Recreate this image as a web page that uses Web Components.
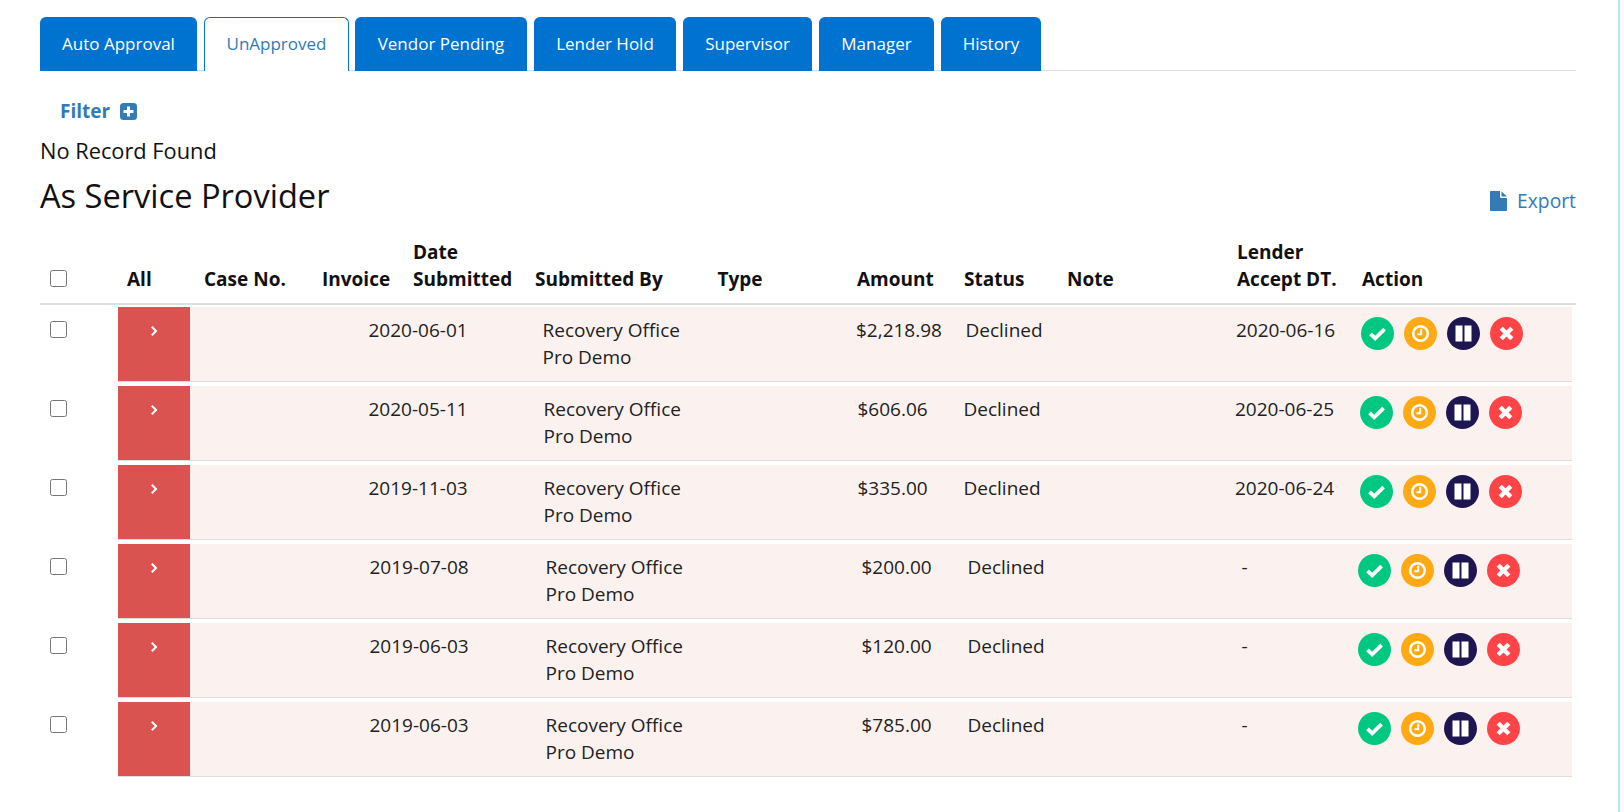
<!DOCTYPE html>
<html>
<head>
<meta charset="utf-8">
<title>Invoices</title>
<style>
  html, body { margin: 0; padding: 0; background: #fff; }
  body { font-family: "Open Sans", sans-serif; color: #111; }
</style>
</head>
<body>
<x-page>
  <x-tabs>
    <x-tab width="157">Auto Approval</x-tab>
    <x-tab width="145" active>UnApproved</x-tab>
    <x-tab width="172">Vendor Pending</x-tab>
    <x-tab width="142">Lender Hold</x-tab>
    <x-tab width="129">Supervisor</x-tab>
    <x-tab width="115">Manager</x-tab>
    <x-tab width="100">History</x-tab>
  </x-tabs>
  <x-filter>Filter</x-filter>
  <x-message>No Record Found</x-message>
  <x-section-head>As Service Provider</x-section-head>
  <x-table-head></x-table-head>
  <x-case-row date="2020-06-01" amount="$2,218.98" status="Declined" lender="2020-06-16" at="368.5,542.5,856,965.5,1236,1361"></x-case-row>
  <x-case-row date="2020-05-11" amount="$606.06" status="Declined" lender="2020-06-25" at="368.5,543.5,857.5,963.5,1235,1360"></x-case-row>
  <x-case-row date="2019-11-03" amount="$335.00" status="Declined" lender="2020-06-24" at="368.5,543.5,857.5,963.5,1235,1360"></x-case-row>
  <x-case-row date="2019-07-08" amount="$200.00" status="Declined" lender="-" at="369.5,545.5,861.5,967.5,1241.5,1358"></x-case-row>
  <x-case-row date="2019-06-03" amount="$120.00" status="Declined" lender="-" at="369.5,545.5,861.5,967.5,1241.5,1358"></x-case-row>
  <x-case-row date="2019-06-03" amount="$785.00" status="Declined" lender="-" at="369.5,545.5,861.5,967.5,1241.5,1358"></x-case-row>
</x-page>

<script>
class XPage extends HTMLElement {
  constructor() {
    super();
    this.attachShadow({ mode: 'open' });
    this.shadowRoot.innerHTML = `
      <style>
        :host {
          display: block;
          box-sizing: border-box;
          width: 1620px;
          height: 812px;
          padding: 17px 0 0 40px;
          border-right: 2px solid #b5e6ee;
          overflow: hidden;
        }
        .inner { width: 1536px; }
      </style>
      <div class="inner"><slot></slot></div>
    `;
  }
}

class XTabs extends HTMLElement {
  constructor() {
    super();
    this.attachShadow({ mode: 'open' });
    this.shadowRoot.innerHTML = `
      <style>
        :host {
          display: flex;
          gap: 7px;
          height: 54px;
          box-shadow: inset 0 -1px 0 #ddd;
        }
      </style>
      <slot></slot>
    `;
  }
}

class XTab extends HTMLElement {
  constructor() {
    super();
    this.attachShadow({ mode: 'open' });
    this.shadowRoot.innerHTML = `
      <style>
        :host {
          display: flex;
          align-items: center;
          justify-content: center;
          box-sizing: border-box;
          height: 54px;
          background: #0073d1;
          color: #fff;
          font: 17px "Open Sans", sans-serif;
          border-radius: 6px 6px 0 0;
          border: 1px solid #0073d1;
          border-bottom: 0;
          padding-bottom: 3px;
        }
        :host([active]) {
          background: #fff;
          color: #337ab7;
          margin-right: -1px;
        }
      </style>
      <slot></slot>
    `;
  }

  connectedCallback() {
    this.style.width = this.getAttribute('width') + 'px';
  }
}

class XFilter extends HTMLElement {
  constructor() {
    super();
    this.attachShadow({ mode: 'open' });
    this.shadowRoot.innerHTML = `
      <style>
        :host {
          display: flex;
          align-items: center;
          gap: 10px;
          height: 26px;
          margin-top: 27px;
          padding-left: 20px;
          color: #337ab7;
          font: 700 19px "Open Sans", sans-serif;
        }
        svg { display: block; }
      </style>
      <slot></slot>
      <svg width="17" height="17" viewBox="0 0 17 17">
        <rect x="0" y="0" width="17" height="17" rx="3.5" fill="#337ab7"/>
        <rect x="3.5" y="7" width="10" height="3" fill="#fff"/>
        <rect x="7" y="3.5" width="3" height="10" fill="#fff"/>
      </svg>
    `;
  }
}

class XMessage extends HTMLElement {
  constructor() {
    super();
    this.attachShadow({ mode: 'open' });
    this.shadowRoot.innerHTML = `
      <style>
        :host {
          display: block;
          margin-top: 13px;
          font: 21.8px/28px "Open Sans", sans-serif;
          color: #111;
        }
      </style>
      <slot></slot>
    `;
  }
}

class XSectionHead extends HTMLElement {
  constructor() {
    super();
    this.attachShadow({ mode: 'open' });
    this.shadowRoot.innerHTML = `
      <style>
        :host {
          display: flex;
          justify-content: space-between;
          align-items: flex-start;
          height: 44px;
          margin-top: 9px;
          color: #111;
          font: 32.6px/44px "Open Sans", sans-serif;
        }
        a {
          display: flex;
          align-items: center;
          gap: 10px;
          margin-top: 13px;
          color: #337ab7;
          font-size: 19.3px;
          line-height: 28px;
          text-decoration: none;
        }
        svg { display: block; }
      </style>
      <span><slot></slot></span>
      <a href="#">
        <svg width="17" height="20" viewBox="0 0 17 20">
          <path d="M0 0.8C0 0.3 0.3 0 0.8 0H10V5.6C10 6.4 10.6 7 11.4 7H17V19.2C17 19.7 16.7 20 16.2 20H0.8C0.3 20 0 19.7 0 19.2Z" fill="#337ab7"/>
          <path d="M11.5 0.2L16.8 5.5H11.5Z" fill="#337ab7"/>
        </svg>
        Export
      </a>
    `;
  }
}

class XTableHead extends HTMLElement {
  constructor() {
    super();
    this.attachShadow({ mode: 'open' });
    this.shadowRoot.innerHTML = `
      <style>
        :host {
          display: grid;
          grid-template-columns: 87px 77px 118px 91px 122px 182.5px 139.5px 107px 103px 170px 125px 1fr;
          align-items: end;
          margin-top: 13px;
          margin-bottom: 2px;
          padding-bottom: 10px;
          height: 62px;
          border-bottom: 2px solid #ddd;
          color: #111;
          font: 700 19px/27px "Open Sans", sans-serif;
        }
        input {
          width: 17px;
          height: 17px;
          margin: 0 0 6px 10px;
          display: block;
        }
      </style>
      <input type="checkbox">
      <div>All</div>
      <div>Case No.</div>
      <div>Invoice</div>
      <div>Date<br>Submitted</div>
      <div>Submitted By</div>
      <div>Type</div>
      <div>Amount</div>
      <div>Status</div>
      <div>Note</div>
      <div>Lender<br>Accept DT.</div>
      <div>Action</div>
    `;
  }
}

class XActionIcon extends HTMLElement {
  constructor() {
    super();
    this.attachShadow({ mode: 'open' });
  }

  connectedCallback() {
    const glyphs = {
      check: '<path d="M9.5 16.8L14.2 21.4L23.6 12.2" fill="none" stroke="#fff" stroke-width="3.8"/>',
      clock: '<circle cx="16.5" cy="16.5" r="7.3" fill="none" stroke="#fff" stroke-width="2.5"/><path d="M17.2 11.8V17.2H13.4" fill="none" stroke="#fff" stroke-width="2"/>',
      pause: '<rect x="8.5" y="8.5" width="7" height="16" fill="#fff"/><rect x="17.5" y="8.5" width="7" height="16" fill="#fff"/>',
      close: '<path d="M11.2 11.2L21.8 21.8M21.8 11.2L11.2 21.8" fill="none" stroke="#fff" stroke-width="4.4"/>'
    };
    const colors = { check: '#00c882', clock: '#ffaa14', pause: '#1e1650', close: '#ff4448' };
    const kind = this.getAttribute('kind');
    this.shadowRoot.innerHTML = `
      <style>
        :host { display: block; width: 33px; height: 33px; }
        svg { display: block; }
      </style>
      <svg width="33" height="33" viewBox="0 0 33 33">
        <circle cx="16.5" cy="16.5" r="16.5" fill="${colors[kind]}"/>
        ${glyphs[kind]}
      </svg>
    `;
  }
}

class XCaseRow extends HTMLElement {
  constructor() {
    super();
    this.attachShadow({ mode: 'open' });
  }

  connectedCallback() {
    // at: left edge, in page pixels, of date, submitted by, amount, status, lender, action
    const at = this.getAttribute('at').split(',').map(Number);
    const widths = [at[0] - 190];
    for (let i = 1; i < at.length; i++) widths.push(at[i] - at[i - 1]);
    const cols = widths.map(w => w + 'px').join(' ') + ' 1fr';

    this.shadowRoot.innerHTML = `
      <style>
        :host {
          display: flex;
          height: 75px;
          margin-bottom: 4px;
          color: #222;
          font: 19px/27px "Open Sans", sans-serif;
        }
        input {
          width: 17px;
          height: 17px;
          margin: 14px 0 0 10px;
          flex: none;
          display: block;
        }
        .body {
          display: flex;
          box-sizing: border-box;
          width: 1454px;
          height: 75px;
          margin-left: 51px;
          background: #fbf2f0;
          border-bottom: 1px solid #ddd;
        }
        .toggle {
          flex: none;
          width: 72px;
          height: 74px;
          background: #db5350;
          color: #fff;
        }
        .toggle svg { display: block; margin: 19px auto 0; }
        .cells {
          flex: 1;
          display: grid;
          grid-template-columns: ${cols};
          padding-top: 10px;
          align-content: start;
        }
        .icons { display: flex; gap: 10px; }
      </style>
      <input type="checkbox">
      <div class="body">
        <div class="toggle">
          <svg width="10" height="10" viewBox="0 0 10 10">
            <path d="M2.8 0.8L7 5L2.8 9.2" fill="none" stroke="#fff" stroke-width="2"/>
          </svg>
        </div>
        <div class="cells">
          <div></div>
          <div>${this.getAttribute('date')}</div>
          <div>Recovery Office<br>Pro Demo</div>
          <div>${this.getAttribute('amount')}</div>
          <div>${this.getAttribute('status')}</div>
          <div>${this.getAttribute('lender')}</div>
          <div class="icons">
            <x-action-icon kind="check"></x-action-icon>
            <x-action-icon kind="clock"></x-action-icon>
            <x-action-icon kind="pause"></x-action-icon>
            <x-action-icon kind="close"></x-action-icon>
          </div>
        </div>
      </div>
    `;
  }
}

customElements.define('x-page', XPage);
customElements.define('x-tabs', XTabs);
customElements.define('x-tab', XTab);
customElements.define('x-filter', XFilter);
customElements.define('x-message', XMessage);
customElements.define('x-section-head', XSectionHead);
customElements.define('x-table-head', XTableHead);
customElements.define('x-action-icon', XActionIcon);
customElements.define('x-case-row', XCaseRow);
</script>
</body>
</html>
